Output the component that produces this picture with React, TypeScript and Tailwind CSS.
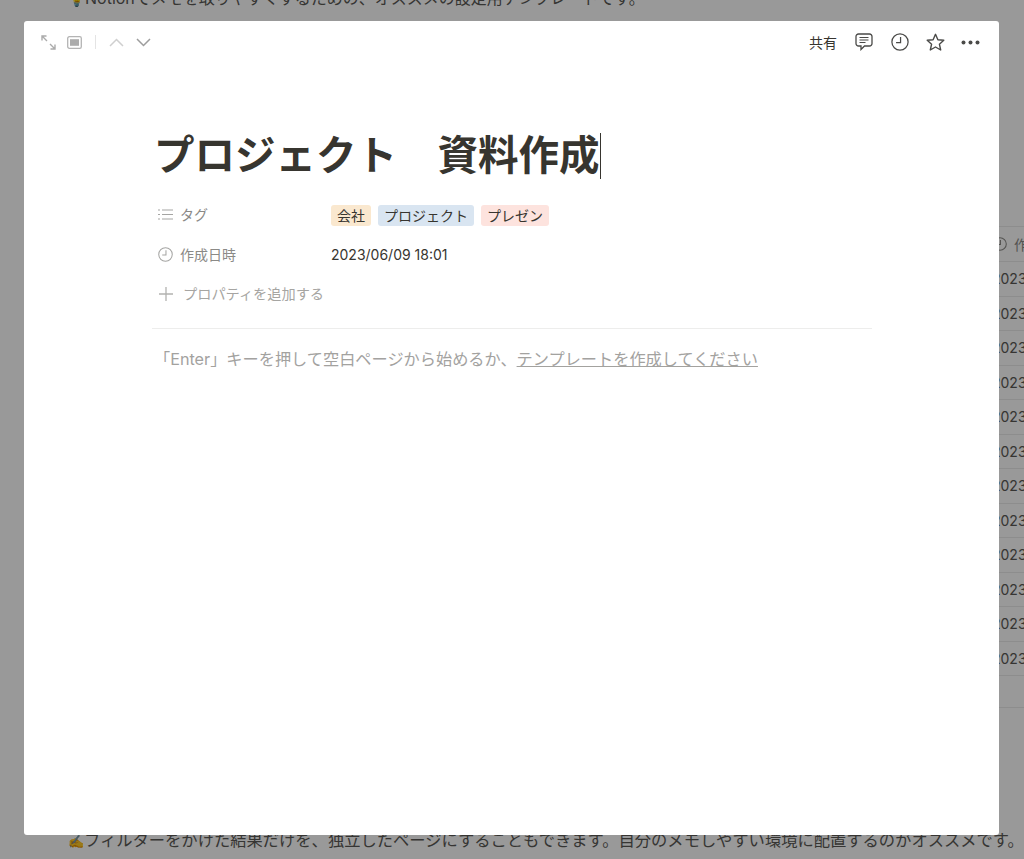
import React from "react";

const font = { fontFamily: '"Inter","Liberation Sans","Noto Sans CJK JP",sans-serif' };
const dates = Array.from({ length: 12 });

function Expand() {
  return (
    <svg width="15" height="15" viewBox="0 0 15 15" fill="none" stroke="#ababab" strokeWidth="1.4">
      <path d="M1 5.500V1H5.500M1 1L6 6M9 9L14 14M9.500 14H14V9.500" />
    </svg>
  );
}
function Peek() {
  return (
    <svg width="15" height="13" viewBox="0 0 15 13" fill="none">
      <rect x="0.7" y="0.7" width="13.6" height="11.6" rx="1.6" stroke="#b4b4b4" strokeWidth="1.3" />
      <rect x="3" y="3.2" width="9" height="6.6" fill="#acacac" />
    </svg>
  );
}
function Chevron({ up, color }: { up?: boolean; color: string }) {
  return (
    <svg width="15" height="9" viewBox="0 0 15 9" fill="none" stroke={color} strokeWidth="1.5">
      <path d={up ? "M1 8L7.5 1.5L14 8" : "M1 1L7.5 7.5L14 1"} />
    </svg>
  );
}
function Comment() {
  return (
    <svg width="18" height="18" viewBox="0 0 18 18" fill="none" stroke="#4a4a48" strokeWidth="1.3">
      <path d="M3.500 1h11A2.500 2.500 0 0 1 17 3.500v7a2.500 2.500 0 0 1-2.500 2.500H9.500L6 16.500V13H3.500A2.500 2.500 0 0 1 1 10.500v-7A2.500 2.500 0 0 1 3.500 1z" />
      <path d="M4.500 4.500h9M4.500 7h9M4.500 9.500h6" strokeWidth="1.100" />
    </svg>
  );
}
function Clock({ size, color, sw }: { size: number; color: string; sw: number }) {
  return (
    <svg className="shrink-0" width={size} height={size} viewBox="0 0 16 16" fill="none" stroke={color} strokeWidth={sw}>
      <circle cx="8" cy="8" r="7.200" />
      <path d="M8.500 3.500V8.500H4.500" />
    </svg>
  );
}
function Star() {
  return (
    <svg width="19" height="18" viewBox="0 0 19 18" fill="none" stroke="#4a4a48" strokeWidth="1.400" strokeLinejoin="round">
      <path d="M9.500 1.300L11.900 6.700L17.800 7.300L13.400 11.200L14.700 17L9.500 14L4.300 17L5.600 11.200L1.200 7.300L7.100 6.700Z" />
    </svg>
  );
}
function Dots() {
  return (
    <svg width="19" height="5" viewBox="0 0 19 5" fill="#4a4a48">
      <circle cx="2.500" cy="2.500" r="2" />
      <circle cx="9.500" cy="2.500" r="2" />
      <circle cx="16.500" cy="2.500" r="2" />
    </svg>
  );
}
function ListIcon() {
  return (
    <svg width="15" height="11" viewBox="0 0 15 11" fill="none" stroke="#a5a5a3" strokeWidth="1.100">
      <path d="M4 1h11M4 5.500h11M4 10h11M0 1h2M0 5.500h2M0 10h2" />
    </svg>
  );
}
function Plus() {
  return (
    <svg width="14" height="14" viewBox="0 0 14 14" fill="none" stroke="#b2b2b0" strokeWidth="1.300">
      <path d="M7 0V14M0 7H14" />
    </svg>
  );
}

function Tag({ label, bg }: { label: string; bg: string }) {
  return <span className={`h-[21px] flex items-center px-[6px] rounded-[3px] text-[14px] text-[#37352f] whitespace-nowrap ${bg}`}>{label}</span>;
}

export default function App() {
  return (
    <div className="relative w-[1024px] h-[859px] overflow-hidden bg-white flex flex-col text-[#5a5955]" style={font}>
      <div className="h-[10px] pl-[68px] flex items-end">
        <span className="text-[16px] leading-[22px] whitespace-nowrap"><span className="text-[14px]">💡</span>Notionでメモを取りやすくするための、オススメの設定用テンプレートです。</span>
      </div>
      <div className="ml-[992px] mt-[216px] flex flex-col">
        <div className="h-[35px] border-t border-[#ebebeb] flex items-center text-[14px] text-[#8b8a87] gap-[7px] pl-[1px] whitespace-nowrap">
          <Clock size={14} color="#8b8a87" sw={1.2} />
          <span>作成日時</span>
        </div>
        {dates.map((_, i) => (
          <div key={i} className="h-[34.500px] border-t border-[#ebebeb] flex items-center text-[14px] whitespace-nowrap">
            2023/06/09
          </div>
        ))}
        <div className="h-[32px] border-t border-[#ebebeb]" />
        <div className="border-t border-[#ebebeb]" />
      </div>
      <div className="mt-auto mb-[7px] pl-[68px] text-[16.300px] leading-[22px] whitespace-nowrap">
        <span className="text-[13px]">✍️</span>フィルターをかけた結果だけを、独立したページにすることもできます。自分のメモしやすい環境に配置するのがオススメです。
      </div>

      <div className="absolute inset-0 bg-black/40" />

      <div className="absolute left-[24px] top-[21px] w-[975px] h-[814px] bg-white rounded-[3px] flex flex-col">
        <div className="h-[42px] flex items-center justify-between pl-[17px] pr-[19px]">
          <div className="flex items-center">
            <Expand />
            <span className="ml-[11px]"><Peek /></span>
            <span className="ml-[13px] w-px h-[14px] bg-[#e4e4e4]" />
            <span className="ml-[13px]"><Chevron up color="#cfcfcf" /></span>
            <span className="ml-[12px]"><Chevron color="#9d9d9d" /></span>
          </div>
          <div className="flex items-center">
            <span className="text-[14px] text-[#37352f]">共有</span>
            <span className="ml-[18px] flex"><Comment /></span>
            <span className="ml-[18px] flex"><Clock size={18} color="#4a4a48" sw={1.100} /></span>
            <span className="ml-[17px] flex"><Star /></span>
            <span className="ml-[16px] flex"><Dots /></span>
          </div>
        </div>

        <div className="pl-[128px] w-[848px] flex flex-col">
          <h1 className="pl-[2px] mt-[68px] h-[50px] flex items-center text-[40.500px] font-bold text-[#37352f] leading-[50px] whitespace-nowrap">
            <span>プロジェクト　資料作成</span>
            <span className="w-px h-[46px] bg-[#37352f]" />
          </h1>
          <div className="mt-[21px] pl-[6px] h-[24px] flex items-center">
            <div className="w-[173px] flex items-center gap-[7px] text-[14px] text-[#8b8a87]">
              <ListIcon />
              <span>タグ</span>
            </div>
            <div className="flex items-center gap-[7px] mt-[2px]">
              <Tag label="会社" bg="bg-[#fae8cf]" />
              <Tag label="プロジェクト" bg="bg-[#d9e5f1]" />
              <Tag label="プレゼン" bg="bg-[#fde3de]" />
            </div>
          </div>
          <div className="mt-[16px] pl-[6px] h-[24px] flex items-center">
            <div className="w-[173px] flex items-center gap-[7px] text-[14px] text-[#8b8a87]">
              <Clock size={15} color="#a5a5a3" sw={1.100} />
              <span>作成日時</span>
            </div>
            <span className="text-[14px] text-[#37352f]">2023/06/09 18:01</span>
          </div>
          <div className="mt-[16px] pl-[7px] h-[24px] flex items-center gap-[10px] text-[14.200px] text-[#a6a5a2]">
            <Plus />
            <span>プロパティを追加する</span>
          </div>
          <div className="mt-[22px] border-t border-[#ededec]" />
          <p className="mt-[18px] pl-[2px] text-[16.200px] leading-[24px] text-[#a3a29f] whitespace-nowrap">
            「Enter」キーを押して空白ページから始めるか、<span className="underline">テンプレートを作成してください</span>
          </p>
        </div>
      </div>
    </div>
  );
}
